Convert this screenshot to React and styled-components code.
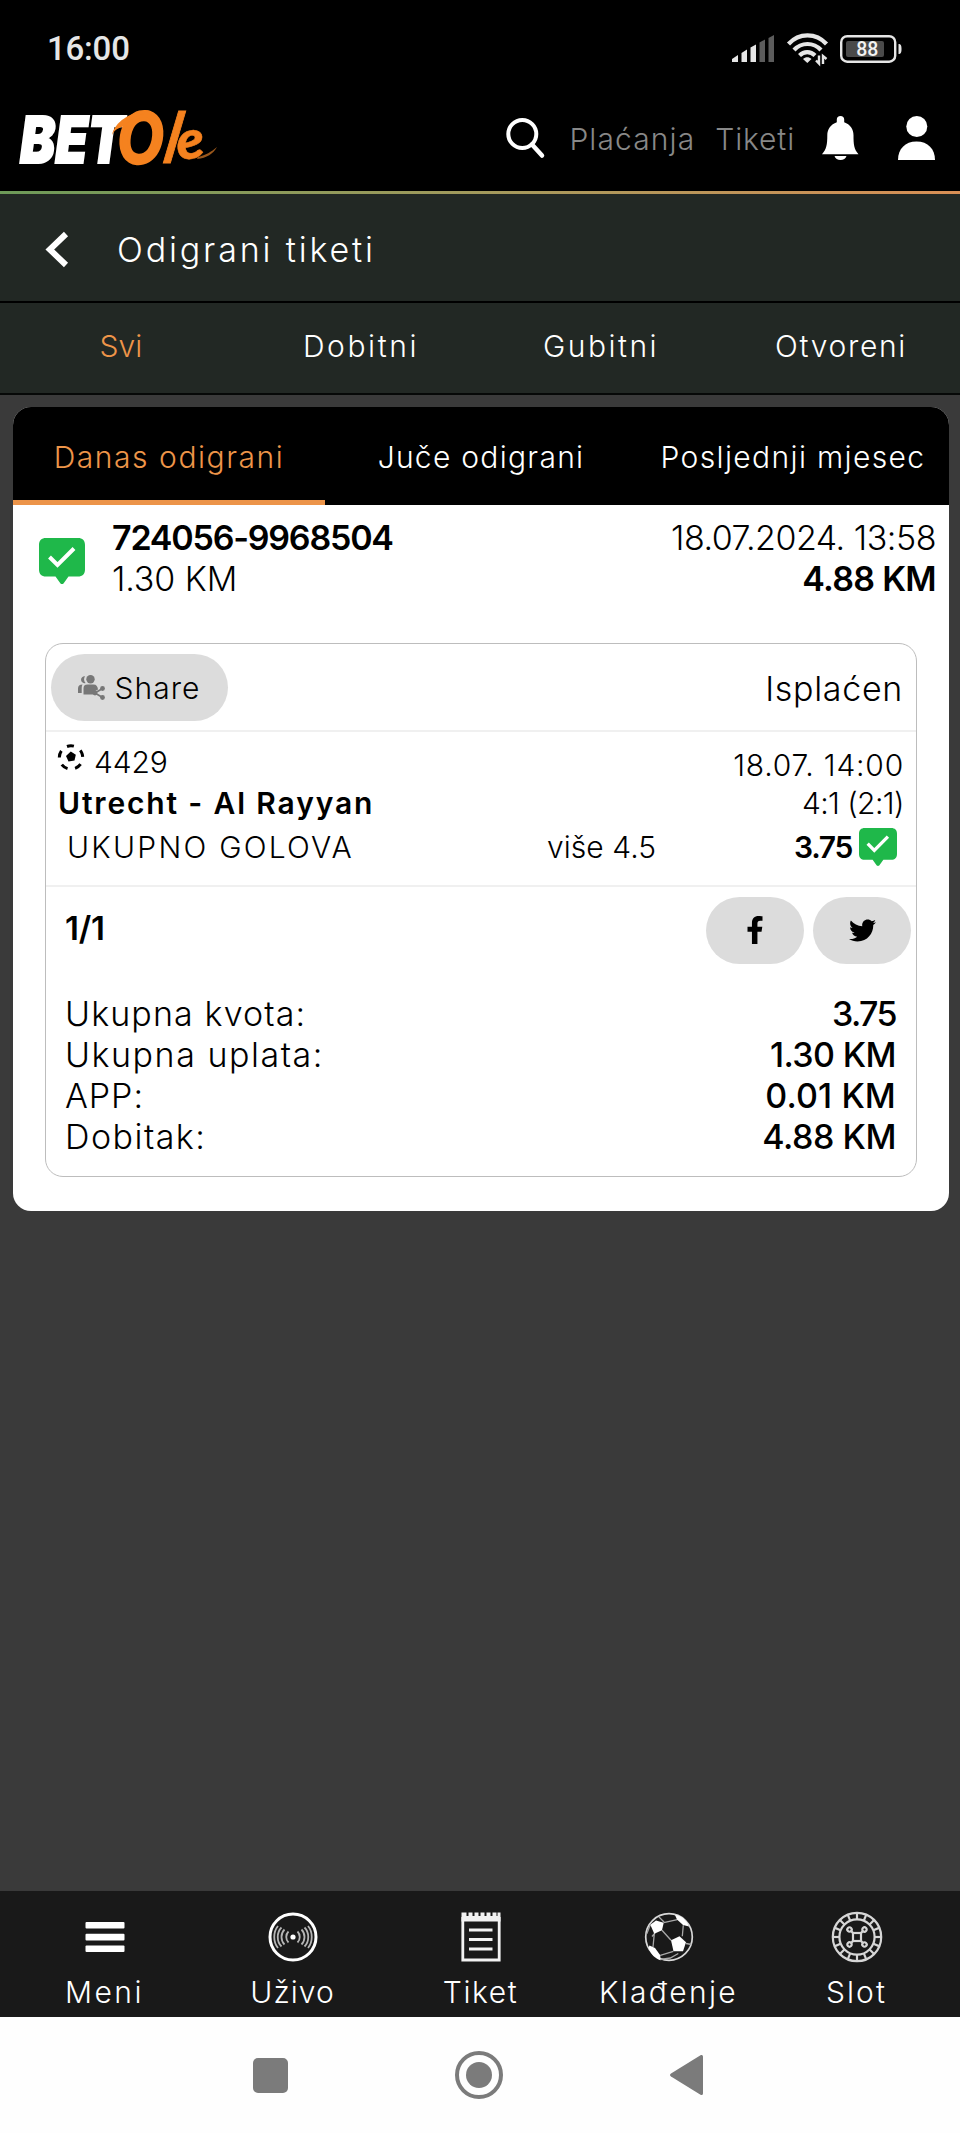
import React from "react";
import styled, { createGlobalStyle } from "styled-components";
import { FaFacebookF, FaTwitter } from "react-icons/fa";

const GlobalStyle = createGlobalStyle`
  * {
    box-sizing: border-box;
  }
  body {
    margin: 0;
    background: #3a3a3a;
    font-family: Inter, "Open Sans", sans-serif;
    font-weight: 300;
    color: #000;
  }
  svg {
    display: block;
    flex: none;
    overflow: visible;
  }
`;

const Page = styled.div`
  width: 960px;
  height: 2133px;
  display: flex;
  flex-direction: column;
  background: #3a3a3a;
  overflow: hidden;
`;

/* every piece of copy, size and tracking change from label to label */
const Label = styled.span`
  font-size: ${(p) => p.$size || 30}px;
  font-weight: ${(p) => p.$weight || 340};
  letter-spacing: ${(p) => (p.$track || 0) - (p.$weight ? 0 : 0.1)}px;
  white-space: pre;
`;

const StatusBar = styled.div`
  height: 97px;
  flex: none;
  display: flex;
  justify-content: space-between;
  align-items: center;
  padding: 0 58px 0 47px;
  background: #000;
`;

const Clock = styled.span`
  font-family: Roboto, sans-serif;
  font-weight: 500;
  font-size: 33px;
  letter-spacing: -0.2px;
  color: #e6e6e6;
`;

const StatusIcons = styled.div`
  display: flex;
  align-items: center;
  gap: 12px;
`;

const Header = styled.header`
  height: 94px;
  flex: none;
  display: flex;
  align-items: center;
  padding: 0 25px 12px 18px;
  background: #000;
`;

const HeaderLinks = styled.nav`
  display: flex;
  gap: 20px;
  margin: 0 27px 0 24px;
  padding-top: 1px;
  color: #888;
`;

const HeaderIcons = styled.div`
  display: flex;
  gap: 39px;
`;

const Spacer = styled.div`
  flex: 1;
`;

const GradientLine = styled.div`
  height: 3px;
  flex: none;
  background: linear-gradient(90deg, #6d9a58 0%, #a39a5c 50%, #d98f55 100%);
`;

const TitleBar = styled.div`
  height: 109px;
  flex: none;
  display: flex;
  align-items: center;
  gap: 48px;
  padding: 4px 0 0 46px;
  background: #222824;
  border-bottom: 2px solid #000;
  color: #fff;
`;

const Filters = styled.div`
  height: 92px;
  flex: none;
  display: grid;
  grid-template-columns: repeat(4, 1fr);
  background: #222824;
  border-bottom: 2px solid #060807;
`;

const Filter = styled.button`
  display: flex;
  align-items: center;
  justify-content: center;
  padding: 0 0 5px 2px;
  border: 0;
  background: none;
  font: inherit;
  color: ${(p) => (p.$active ? "#ee9549" : "#fff")};
  cursor: pointer;
`;

const Content = styled.main`
  flex: 1;
  padding: 12px 11px 0 13px;
`;

const Card = styled.section`
  height: 804px;
  border-radius: 18px;
  background: #fff;
  overflow: hidden;
`;

const DayTabs = styled.div`
  height: 98px;
  display: grid;
  grid-template-columns: repeat(3, 1fr);
  background: #000;
`;

const DayTab = styled(Filter)`
  padding: 7px 0 0;
  border-bottom: 5px solid ${(p) => (p.$active ? "#ec9449" : "#000")};
`;

const TicketHead = styled.div`
  height: 138px;
  display: flex;
  align-items: flex-start;
  padding: 12px 13px 0 26px;
`;

const Bubble = styled.span`
  padding-top: 21px;
  margin-right: 27px;
`;

const Lines = styled.div`
  display: flex;
  flex-direction: column;
  align-items: ${(p) => (p.$end ? "flex-end" : "flex-start")};
  line-height: 41px;
`;

const Slip = styled.div`
  height: 534px;
  margin: 0 32px;
  border: 1px solid #bdbdbd;
  border-radius: 18px;
`;

const SlipTop = styled.div`
  height: 88px;
  display: flex;
  justify-content: space-between;
  align-items: center;
  padding: 2px 13px 2px 5px;
  border-bottom: 2px solid #f0f0f0;
`;

const Pill = styled.button`
  display: flex;
  align-items: center;
  justify-content: center;
  gap: 9px;
  width: ${(p) => p.$width}px;
  height: 67px;
  padding: 0;
  border: 0;
  border-radius: 34px;
  background: #dcdcdc;
  color: #000;
  font: inherit;
  cursor: pointer;
`;

const ShareText = styled(Label)`
  padding-top: 2px;
`;

const PaidStatus = styled(Label)`
  padding-top: 2px;
`;

const Match = styled.div`
  height: 155px;
  padding: 9px 12px 0;
  border-bottom: 2px solid #f0f0f0;
`;

const MatchRow = styled.div`
  height: ${(p) => p.$height}px;
  display: flex;
  justify-content: space-between;
  align-items: center;
`;

const MatchCode = styled.div`
  display: flex;
  align-items: flex-start;
  gap: 10px;
  line-height: 38px;
`;

const Kickoff = styled(Label)`
  padding-top: 6px;
`;

const BetRow = styled.div`
  height: 47px;
  display: grid;
  grid-template-columns: 480px 1fr auto;
  align-items: center;
  padding: 1px 7px 0 9px;
`;

const Odds = styled.div`
  display: flex;
  align-items: center;
  gap: 7px;
`;

const SocialRow = styled.div`
  height: 88px;
  display: flex;
  align-items: center;
  gap: 9px;
  padding: 0 5px 2px 19px;
`;

const Counter = styled(Label)`
  padding-bottom: 5px;
`;

const Totals = styled.dl`
  margin: 18px 0 0;
  padding: 0 20px 0 19px;
`;

const Total = styled.div`
  height: 41px;
  display: flex;
  justify-content: space-between;
  align-items: center;

  dd {
    margin: 0;
  }
`;

const BottomBar = styled.nav`
  height: 126px;
  flex: none;
  display: grid;
  grid-template-columns: repeat(5, 188px);
  justify-content: center;
  background: #191919;
  color: #fff;
`;

const BottomItem = styled.a`
  display: flex;
  flex-direction: column;
  align-items: center;
  gap: 7px;
  padding: 20px 0 0 1px;
  line-height: 44px;
`;

const SystemNav = styled.div`
  height: 116px;
  flex: none;
  display: flex;
  align-items: center;
  padding-left: 253px;
  background: #fefefe;
`;

const RecentsKey = styled.div`
  width: 35px;
  height: 35px;
  border-radius: 5px;
  background: #7b7b7b;
`;

const HomeKey = styled.div`
  width: 48px;
  height: 48px;
  margin: 0 167px;
  border: 4px solid #7b7b7b;
  border-radius: 50%;
  padding: 7px;
  background: #7b7b7b content-box;
`;

const SignalIcon = () => (
  <svg width="43" height="28" viewBox="0 0 43 28">
    <g fill="#e6e6e6">
      <path d="M0 27v-3l6-4v7z" />
      <path d="M9.5 27V18l5.5-3.500V27z" />
      <path d="M18.500 27V12.500l5.500-3V27z" />
    </g>
    <g fill="#5c5c5c">
      <path d="M27.500 27V7.500l5.500-3V27z" />
      <path d="M36.500 27V3l5.500-3v27z" />
    </g>
  </svg>
);

const WifiIcon = () => (
  <svg width="41" height="31" viewBox="0 0 41 31">
    <g fill="none" stroke="#e6e6e6" strokeWidth="4.200">
      <path d="M1.500 11C12-.5 29-.5 39.500 11" />
      <path d="M7 17c7.500-8 19.500-8 27 0" />
      <path d="M12.500 22.500c4.500-4.500 11-4.500 15.500 0" />
    </g>
    <path d="M16 26c2.500-2.300 6-2.300 8.500 0l-4.200 4z" fill="#e6e6e6" />
    <path d="M32 22.500v8l-3-3M36 31v-8l3.500 3" fill="none" stroke="#e6e6e6" strokeWidth="2.400" />
  </svg>
);

const BatteryIcon = () => (
  <svg width="62" height="28" viewBox="0 0 62 28">
    <rect x="1.200" y="1.200" width="54" height="25.500" rx="6" fill="none" stroke="#e6e6e6" strokeWidth="2.400" />
    <rect x="6" y="6" width="38" height="16" rx="2" fill="#4a4a4a" />
    <path d="M58.500 9c2.500 0 3 1.500 3 5s-.5 5-3 5z" fill="#e6e6e6" />
    <text x="27.300" y="21" textAnchor="middle" fontFamily="Roboto" fontWeight="500" fontSize="19.500" fill="#f2f2f2">88</text>
  </svg>
);

const Logo = () => (
  <svg width="202" height="66" viewBox="0 -1 202 66">
    <text x="2" y="57" fontFamily="Inter" fontWeight="900" fontStyle="italic" fontSize="64.500" fill="#fff" stroke="#fff" strokeWidth="2" textLength="104" lengthAdjust="spacingAndGlyphs">
      BET
    </text>
    <g fontFamily="Lato" fontWeight="900" fontStyle="italic" fill="#f5821f" stroke="#f5821f">
      <text x="106" y="57" fontSize="70" fontWeight="700" strokeWidth="4" textLength="44" lengthAdjust="spacingAndGlyphs" transform="rotate(4 125 30) translate(-5 0)">O</text>
      <text transform="translate(144 57) skewX(-11)" fontSize="70" fontWeight="700" strokeWidth="1" textLength="14" lengthAdjust="spacingAndGlyphs">l</text>
      <text transform="translate(160 54) rotate(-6)" fontSize="54" strokeWidth="0.500" textLength="28" lengthAdjust="spacingAndGlyphs">e</text>
    </g>
    <path d="M94 29c3-13 17-23 38-25-10 5-20 9-26 16-5 2-9 3-12 9z" fill="#f5821f" />
    <path d="M180 51c8-2 13-5 19-10-4 7-10 11-20 12z" fill="#9a571b" />
  </svg>
);

const SearchIcon = () => (
  <svg width="39" height="42" viewBox="0 0 39 42" fill="none" stroke="#fff" strokeWidth="4">
    <circle cx="16.300" cy="17" r="14" />
    <path d="M26 27.500 36 38.500" strokeWidth="4.500" strokeLinecap="round" />
  </svg>
);

const BellIcon = () => (
  <svg width="37" height="44" viewBox="0 0 37 44" fill="#fff">
    <path d="M18.500 0c2.300 0 3.700 1.500 3.700 3.500v2.700c6 2 9.300 7 9.300 13 0 9 .5 14 5 19H0c4.500-5 5.300-10 5.300-19 0-6 3.500-11 9.500-13V3.500C14.800 1.500 16.200 0 18.500 0z" />
    <path d="M12.500 40h12c-.8 2.600-3 4-6 4s-5.200-1.400-6-4z" />
  </svg>
);

const UserIcon = () => (
  <svg width="37" height="44" viewBox="0 0 37 44" fill="#fff">
    <circle cx="18.800" cy="10.500" r="10.500" />
    <path d="M0 44c0-11 7-18.500 18.500-18.500S37 33 37 44z" />
  </svg>
);

const BackIcon = () => (
  <svg width="23" height="35" viewBox="0 0 23 35" fill="none" stroke="#fff" strokeWidth="6">
    <path d="M20 2 3.800 17.500 20 33" />
  </svg>
);

const WonIcon = ({ size }) => (
  <svg width={size} height={size} viewBox="0 0 46 46">
    <path d="M7 0h32c4.500 0 7 2.500 7 7v24.500c0 4.500-2.500 7-7 7h-9.500l-5 7q-1.500 1-3 0l-5-7H7c-4.500 0-7-2.500-7-7V7c0-4.500 2.500-7 7-7z" fill="#1fb84a" />
    <path d="m10.500 19 8 8L35 10.500" fill="none" stroke="#fff" strokeWidth="4" />
  </svg>
);

const ShareIcon = () => (
  <svg width="27" height="25" viewBox="0 0 27 25" fill="#777">
    <circle cx="12.500" cy="4.200" r="4.200" />
    <path d="M7 1.200a5.800 5.800 0 0 0 .6 6.800A3.500 3.500 0 1 1 7 1.200z" />
    <path d="M4.500 9.500C1.500 9.500 0 11 0 13.500V18h3.700v-5c0-1.500.3-2.700.8-3.500zM9.500 9.500h6c3 0 4.200 2 4.500 5l-4.500 2.500v2.500H5.500V13.500c0-2.500 1-4 4-4z" />
    <circle cx="24.500" cy="13.500" r="2.400" />
    <circle cx="17" cy="18" r="2.400" />
    <circle cx="24.500" cy="22.500" r="2.400" />
    <path d="m24.500 13.500-7.500 4.500 7.500 4.500" fill="none" stroke="#777" strokeWidth="1.700" />
  </svg>
);

const BallIcon = () => (
  <svg width="26" height="27" viewBox="0 0 26 27">
    <circle cx="13" cy="14.500" r="11.700" fill="none" stroke="#000" strokeWidth="3" strokeDasharray="7 7.700" transform="rotate(-110 13 14.500)" />
    <path d="m12.800 8.500 5 3.200-1.300 5.800-6 1-2.500-5.500z" />
  </svg>
);

const MenuIcon = () => (
  <svg width="52" height="52" viewBox="-26 -26 52 52" fill="#fff">
    <rect x="-19.500" y="-15" width="39" height="6.600" rx="1" />
    <rect x="-19.500" y="-3.200" width="39" height="6.600" rx="1" />
    <rect x="-19.500" y="8.400" width="39" height="6.600" rx="1" />
  </svg>
);

const LiveIcon = () => (
  <svg width="52" height="52" viewBox="-26 -26 52 52" fill="none" stroke="#b5b5b5" strokeWidth="1.800">
    <circle r="23" stroke="#fff" strokeWidth="3" />
    <circle r="2.600" fill="#fff" stroke="none" />
    {[1, -1].map((s) => (
      <g key={s} transform={`scale(${s} 1)`}>
        <path d="M4.500-5.500c3 3 3 8 0 11" />
        <path d="M8.500-7.500c4 4 4 11 0 15" />
        <path d="M11.500-9.500c5 5 5 14 0 19" />
        <path d="M15-11c5 6 5 16 0 22" />
      </g>
    ))}
  </svg>
);

const TicketIcon = () => (
  <svg width="52" height="52" viewBox="-26 -26 52 52" fill="none" stroke="#f2f2f2" strokeWidth="2.800">
    <path d="M-18.200-20v43h36.400v-43" />
    <path d="M-19.500-24.500h5v3.500h2v-3.500h4v3.500h2v-3.500h4v3.500h2v-3.500h4v3.500h2v-3.500h4v3.500h2v-3.500h4v3.500h1v-3.500h3v9h-39z" fill="#f2f2f2" stroke="none" />
    <path d="M-12-7h23.500M-12 2.500h23.500M-12 12h23.500" />
  </svg>
);

const SoccerIcon = () => (
  <svg width="52" height="52" viewBox="-26 -26 52 52">
    <g fill="none" stroke="#a8a8a8" strokeWidth="1.300">
      <circle r="23.300" strokeWidth="1.700" stroke="#d8d8d8" />
      <path d="M-7-6.700 2 3.300M-5.300-14.300 8.300-17.300M14.300-11.700l-1 11M-14.700-3.300-16 10M4.300 14.300l-13 4M17 6.500l5.500 1M-18.700-12.300l-3.500 9M-14-4l-3 3.500M-8.700 22.500l10-1.500 8-4.500M-5-15l-5-5" />
    </g>
    <g fill="#fff">
      <path d="M-18.700-12.300-13-16.500-5.300-14.300-7-6.700l-7.700 3.400z" />
      <path d="M2 3.300 10.500-.7 17 5.300l-3 9H4.500z" />
      <path d="M6-22c6 .5 11 4.500 14 11.500l-6-1.500-6-5.500z" />
      <path d="m-19.500 8.500 5.500 2.500 5.300 7.300v5c-5-1.500-9.500-6-11.800-12.500z" />
    </g>
  </svg>
);

const ChipIcon = () => (
  <svg width="52" height="52" viewBox="-26 -26 52 52" fill="none" stroke="#d6d6d6" strokeWidth="2.200">
    <circle r="24.200" />
    <circle r="17.600" />
    {[...Array(16)].map((_, i) => (
      <path key={i} d="M0-24.500v6.700" transform={`rotate(${i * 22.5})`} />
    ))}
    <rect x="-4" y="-4" width="8" height="8" />
    {[45, 135, 225, 315].map((a) => (
      <g key={a} transform={`rotate(${a})`}>
        <path d="M0-5.500v-2.500" />
        <circle cy="-10.600" r="2.200" />
      </g>
    ))}
  </svg>
);

const BackKey = () => (
  <svg width="33" height="40" viewBox="0 0 33 40" fill="#7b7b7b">
    <path d="M30.500.3c1.500-.8 2.500 0 2.500 1.500v36.400c0 1.500-1 2.300-2.500 1.500L1 21.500q-2-1.500 0-3z" />
  </svg>
);

const filters = [
  { text: "Svi", track: 0.2 },
  { text: "Dobitni", track: 2.7 },
  { text: "Gubitni", track: 2.6 },
  { text: "Otvoreni", track: 1.8 },
];

const days = [
  { text: "Danas odigrani", track: 1.64 },
  { text: "Juče odigrani", track: 1.38 },
  { text: "Posljednji mjesec", track: 1.46 },
];

const totals = [
  { name: "Ukupna kvota:", track: 1.22, value: "3.75", valueTrack: -1.6 },
  { name: "Ukupna uplata:", track: 1.63, value: "1.30 KM", valueTrack: -0.6 },
  { name: "APP:", track: 1.04, value: "0.01 KM", valueTrack: 0.1 },
  { name: "Dobitak:", track: 1.57, value: "4.88 KM", valueTrack: -0.45 },
];

const menu = [
  { text: "Meni", track: 2.55, Icon: MenuIcon },
  { text: "Uživo", track: 1.14, Icon: LiveIcon },
  { text: "Tiket", track: 1.67, Icon: TicketIcon },
  { text: "Klađenje", track: 2.43, Icon: SoccerIcon },
  { text: "Slot", track: 2.19, Icon: ChipIcon },
];

const App = () => {
  return (
    <Page>
      <GlobalStyle />
      <StatusBar>
        <Clock>16:00</Clock>
        <StatusIcons>
          <SignalIcon />
          <WifiIcon />
          <BatteryIcon />
        </StatusIcons>
      </StatusBar>
      <Header>
        <Logo />
        <Spacer />
        <SearchIcon />
        <HeaderLinks>
          <Label $track={1.2}>Plaćanja</Label>
          <Label $track={0.96}>Tiketi</Label>
        </HeaderLinks>
        <HeaderIcons>
          <BellIcon />
          <UserIcon />
        </HeaderIcons>
      </Header>
      <GradientLine />
      <TitleBar>
        <BackIcon />
        <Label $size={34} $track={2.95}>Odigrani tiketi</Label>
      </TitleBar>
      <Filters>
        {filters.map((f, i) => (
          <Filter key={f.text} $active={i === 0}>
            <Label $track={f.track}>{f.text}</Label>
          </Filter>
        ))}
      </Filters>
      <Content>
        <Card>
          <DayTabs>
            {days.map((d, i) => (
              <DayTab key={d.text} $active={i === 0}>
                <Label $track={d.track}>{d.text}</Label>
              </DayTab>
            ))}
          </DayTabs>
          <TicketHead>
            <Bubble>
              <WonIcon size={46} />
            </Bubble>
            <Lines>
              <Label $size={34} $weight={600} $track={-1.21}>724056-9968504</Label>
              <Label $size={34}>1.30 KM</Label>
            </Lines>
            <Spacer />
            <Lines $end>
              <Label $size={34} $track={-0.37}>18.07.2024. 13:58</Label>
              <Label $size={34} $weight={600} $track={-0.74}>4.88 KM</Label>
            </Lines>
          </TicketHead>
          <Slip>
            <SlipTop>
              <Pill $width={177}>
                <ShareIcon />
                <ShareText $track={1.15}>Share</ShareText>
              </Pill>
              <PaidStatus $size={34} $track={0.8}>Isplaćen</PaidStatus>
            </SlipTop>
            <Match>
              <MatchRow $height={41}>
                <MatchCode>
                  <BallIcon />
                  <Label>4429</Label>
                </MatchCode>
                <Kickoff $track={0.9}>18.07. 14:00</Kickoff>
              </MatchRow>
              <MatchRow $height={41}>
                <Label $weight={600} $track={1.84}>Utrecht - Al Rayyan</Label>
                <Label $track={-0.46}>4:1 (2:1)</Label>
              </MatchRow>
              <BetRow>
                <Label $track={2.35}>UKUPNO GOLOVA</Label>
                <Label $track={0.16}>više 4.5</Label>
                <Odds>
                  <Label $weight={600} $track={-1.32}>3.75</Label>
                  <WonIcon size={38} />
                </Odds>
              </BetRow>
            </Match>
            <SocialRow>
              <Counter $size={33} $weight={600} $track={-0.23}>1/1</Counter>
              <Spacer />
              <Pill $width={98}>
                <FaFacebookF size={28} />
              </Pill>
              <Pill $width={98}>
                <FaTwitter size={27} />
              </Pill>
            </SocialRow>
            <Totals>
              {totals.map((t) => (
                <Total key={t.name}>
                  <dt>
                    <Label $size={34} $track={t.track}>{t.name}</Label>
                  </dt>
                  <dd>
                    <Label $size={34} $weight={500} $track={t.valueTrack}>{t.value}</Label>
                  </dd>
                </Total>
              ))}
            </Totals>
          </Slip>
        </Card>
      </Content>
      <BottomBar>
        {menu.map(({ text, track, Icon }) => (
          <BottomItem key={text}>
            <Icon />
            <Label $track={track}>{text}</Label>
          </BottomItem>
        ))}
      </BottomBar>
      <SystemNav>
        <RecentsKey />
        <HomeKey />
        <BackKey />
      </SystemNav>
    </Page>
  );
};

export default App;
